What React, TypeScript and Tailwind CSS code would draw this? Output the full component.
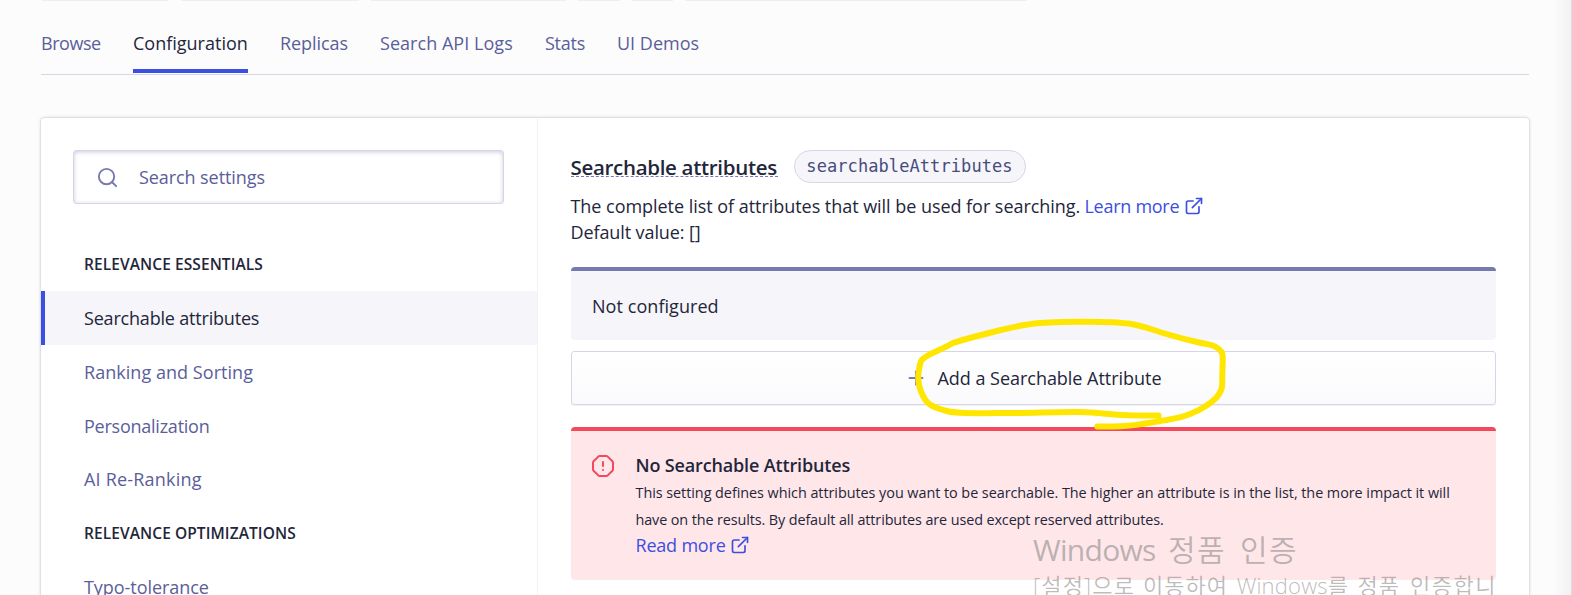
import { ExternalLink, OctagonAlert, Plus, Search } from "lucide-react";

const tabs = [
  { label: "Browse", cls: "w-[60px] tracking-[-0.45px]" },
  { label: "Configuration", cls: "w-[115px]", active: true },
  { label: "Replicas", cls: "w-[68px] tracking-[-0.06px]" },
  { label: "Search API Logs", cls: "w-[133px] tracking-[0.04px]" },
  { label: "Stats", cls: "w-[40px] tracking-[-0.25px]" },
  { label: "UI Demos", cls: "w-[84px]" },
];

const essentials = [
  { label: "Searchable attributes", cls: "h-[54px] tracking-[-0.19px]", active: true },
  { label: "Ranking and Sorting", cls: "h-[54px] tracking-[0.04px]" },
  { label: "Personalization", cls: "h-[54px] tracking-[-0.24px]" },
  { label: "AI Re-Ranking", cls: "h-[53px] pb-px tracking-[0.2px]" },
];

const optimizations = [{ label: "Typo-tolerance", cls: "h-[54px] tracking-[-0.05px]" }];

function GroupTitle({ children }: { children: string }) {
  return (
    <h3 className="flex h-[54px] items-center pl-[43px] text-[15.5px] font-semibold tracking-[0.08px] uppercase">
      {children}
    </h3>
  );
}

function SettingRow({ label, cls, active }: { label: string; cls: string; active?: boolean }) {
  return (
    <a
      className={`flex items-center border-l-4 pl-[39px] ${cls} ${
        active ? "border-[#3c4fe0] bg-[#f5f5fa] text-[#23263b]" : "border-transparent text-[#5a5e9a]"
      }`}
    >
      {label}
    </a>
  );
}

function Chips() {
  return (
    <div className="flex h-px pl-[42px]">
      <div className="w-[126px] bg-[#efeff2]" />
      <div className="ml-[13px] w-[178px] bg-[#efeff2]" />
      <div className="ml-3 w-[195px] bg-[#efeff2]" />
      <div className="ml-3 w-[42px] bg-[#efeff2]" />
      <div className="ml-3 w-[41px] bg-[#efeff2]" />
      <div className="ml-3 w-[342px] bg-[#efeff2]" />
    </div>
  );
}

function Sidebar() {
  return (
    <aside className="w-[497px] shrink-0 border-r border-[#f3f3f6] pt-8">
      <div className="mr-[33px] ml-8 flex h-[54px] items-center rounded-[3px] border border-[#d6d6e7] bg-white pl-[21.500px] text-[#5a5e9a] shadow-[inset_0_1px_4px_rgba(119,122,175,0.4)]">
        <Search className="size-[23px] text-[#777aaf]" strokeWidth={2} />
        <span className="ml-[20.500px] tracking-[-0.08px]">Search settings</span>
      </div>
      <nav className="mt-[33px]">
        <GroupTitle>Relevance Essentials</GroupTitle>
        {essentials.map((e) => (
          <SettingRow key={e.label} {...e} />
        ))}
        <GroupTitle>Relevance Optimizations</GroupTitle>
        {optimizations.map((e) => (
          <SettingRow key={e.label} {...e} />
        ))}
      </nav>
    </aside>
  );
}

function Details() {
  return (
    <main className="flex-1 pt-8 pr-[33px] pl-[32.500px]">
      <div className="flex h-[33px] items-center">
        <h2 className="w-[207px] border-b border-dashed border-[#777aaf] pb-px text-[20.5px] leading-[18px] font-semibold tracking-[-0.31px] whitespace-nowrap">
          <span className="relative top-px">Searchable attributes</span>
        </h2>
        <code className="ml-4 flex h-[33px] w-[232px] items-center justify-center rounded-full border border-[#d6d6e7] bg-[#f5f5fa] pb-[2px] font-['DejaVu_Sans_Mono',monospace] text-[17px] tracking-[0.08px] text-[#484c7a]">
          searchableAttributes
        </code>
      </div>
      <p className="mt-[10px] flex h-[26px] items-center whitespace-nowrap">
        <span className="w-[514px] tracking-[-0.04px]">
          The complete list of attributes that will be used for searching.
        </span>
        <a className="w-[99.500px] tracking-[-0.28px] text-[#3c4fe0]">Learn more</a>
        <ExternalLink className="size-[20px] text-[#3c4fe0]" />
      </p>
      <p className="flex h-[26px] items-center tracking-[-0.1px]">Default value: []</p>

      <div className="mt-[22px] flex h-[73px] items-center rounded-[4px] border-t-4 border-[#777aaf] bg-[#f5f5fa] pl-[21.500px] tracking-[0.06px]">
        Not configured
      </div>

      <button className="mt-[11px] flex h-[54px] w-full items-center rounded-[3px] border border-[#d6d6e7] bg-linear-to-b from-white to-[#fafafc] pl-[333px] shadow-[0_1px_0_rgba(35,38,59,0.05)]">
        <Plus className="size-[22px] text-[#777aaf]" strokeWidth={2.2} />
        <span className="ml-[11px] tracking-[-0.03px]">Add a Searchable Attribute</span>
      </button>

      <section className="mt-[22px] flex h-[153px] rounded-[4px] border-t-4 border-[#f4495d] bg-[#ffe6e9] pt-[20px] pl-[20px]">
        <OctagonAlert className="mt-[3px] size-6 shrink-0 text-[#f4495d]" />
        <div className="ml-[21px] whitespace-nowrap">
          <h4 className="h-[28px] leading-[28px] font-semibold tracking-[-0.15px]">No Searchable Attributes</h4>
          <p className="pt-px text-[14.4px] leading-[26.7px] tracking-[-0.045px]">
            This setting defines which attributes you want to be searchable. The higher an attribute is in the list,
            the more impact it will
          </p>
          <p className="text-[14.4px] leading-[26.7px] tracking-[-0.11px]">
            have on the results. By default all attributes are used except reserved attributes.
          </p>
          <a className="-mt-px flex h-[26px] items-center text-[#3c4fe0]">
            <span className="w-[94.500px] tracking-[-0.2px]">Read more</span>
            <ExternalLink className="size-[20px]" />
          </a>
        </div>
      </section>
    </main>
  );
}

function Watermark() {
  return (
    <div className="pointer-events-none absolute top-[529px] left-[1033px] w-[464px] font-['Open_Sans','Noto_Sans_CJK_KR',sans-serif] font-[350] whitespace-nowrap text-[#828282]/55">
      <div className="flex h-[42px] items-center text-[30px]">
        <span className="w-[135px] font-normal tracking-[-0.7px]">Windows</span>
        <span className="w-[72px] tracking-[1.5px]">정품</span>
        <span className="tracking-[1.5px]">인증</span>
      </div>
      <div className="flex h-[28px] items-center text-[22px]">
        <span className="w-[111px] tracking-[1.2px]">[설정]으로</span>
        <span className="w-[94.500px] tracking-[1px]">이동하여</span>
        <span className="w-[122px] tracking-[0.2px]">Windows를</span>
        <span className="w-[53px] tracking-[1px]">정품</span>
        <span className="tracking-[1.5px]">인증합니</span>
      </div>
    </div>
  );
}

function MarkerCircle() {
  return (
    <svg
      className="pointer-events-none absolute top-0 left-0"
      width="1572"
      height="595"
      fill="none"
      stroke="#ffe600"
      strokeWidth="6"
      strokeLinecap="round"
      strokeLinejoin="round"
    >
      <path d="M1158.500 415.500C1148 415.600 1137 415.700 1127 415.300C1110 414.500 1097 412.500 1080 412C1058 411.600 1035 413 1013 413C995 413 977 413.500 960 412.700C955 412.500 951 412.200 946.700 411C940 409 933 407.500 928.300 403.300C923.500 398.500 920.500 391 919 385C918 380 918 375 919 370C919.500 366 920 363 921.700 360C928 353 942 350 951.700 343.500C966 338.500 982 335 996.700 331C1010 328 1023 324.500 1036.700 323.300C1053 321.500 1070 321.700 1086.700 321.700C1101 321.700 1116 321.700 1130 323.800C1144 326 1157 331.500 1170 335C1180 338 1190 340.500 1200 342.700C1206 344 1212 344.300 1216.700 347.500C1220 349.500 1222.300 352 1222.700 356C1223 364 1222 374 1222.300 383.300C1222.300 389 1220 393.500 1216.700 397.300C1209.500 404.500 1200 410 1190 414C1182.500 417 1175 418.600 1166.700 420C1153 422 1140 425 1126.700 425.700C1117 426.500 1107 426.600 1097.300 426.600" />
    </svg>
  );
}

export default function App() {
  return (
    <div className="relative h-[595px] w-[1572px] overflow-hidden bg-[#fcfcfd] font-['Open_Sans','Noto_Sans',sans-serif] text-[18px] leading-[26px] text-[#23263b]">
      <Chips />
      <nav className="mr-[43px] ml-[41px] flex h-[74px] gap-8 border-b border-[#d6d6e7] pb-px">
        {tabs.map((t) => (
          <a
            key={t.label}
            className={`flex items-center border-b-4 pt-4 whitespace-nowrap ${t.cls} ${
              t.active ? "border-[#3c4fe0] text-[#23263b]" : "border-transparent text-[#5a5e9a]"
            }`}
          >
            {t.label}
          </a>
        ))}
      </nav>
      <div className="mt-[43px] mr-[43px] ml-[41px] flex h-[520px] rounded-[4px] bg-white shadow-[0_0_0_1px_rgba(35,38,59,0.05),0_0_3px_1px_rgba(35,38,59,0.12)]">
        <Sidebar />
        <Details />
      </div>
      <div className="absolute top-0 right-0 h-full w-[18px] border-r border-[#dedee1] bg-linear-to-r from-transparent to-[#f1f1f3]" />
      <MarkerCircle />
      <Watermark />
    </div>
  );
}
